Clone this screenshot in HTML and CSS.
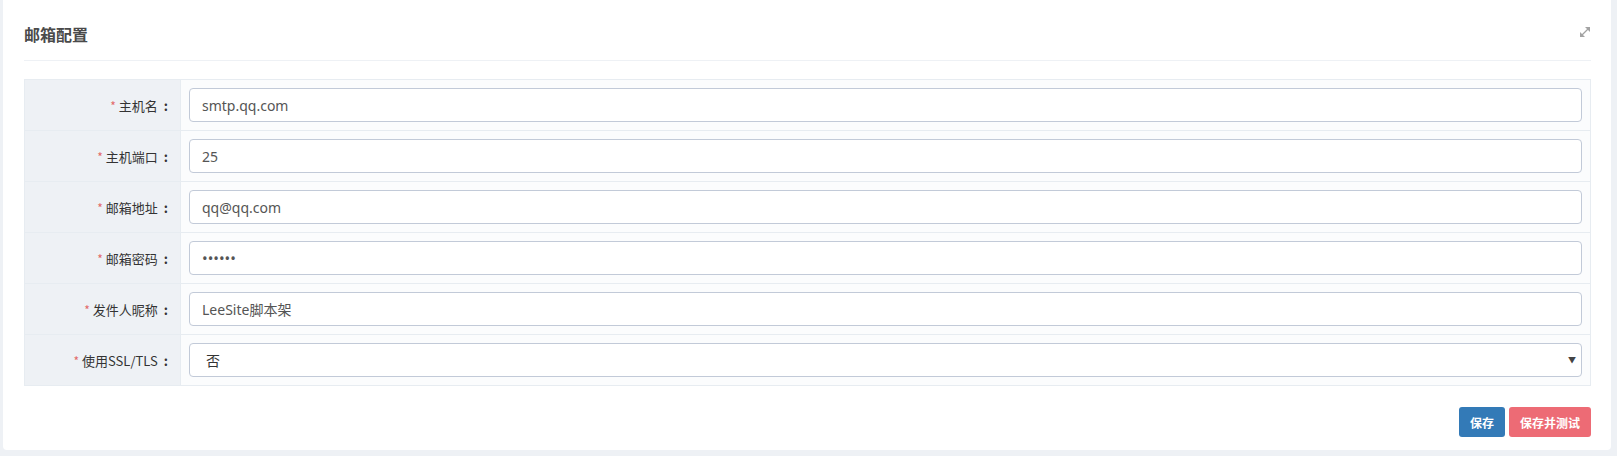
FILE: index.html
```html
<!DOCTYPE html>
<html lang="zh-CN">
<head>
<meta charset="utf-8">
<title>邮箱配置</title>
<link rel="stylesheet" href="styles.css">
</head>
<body>
<div class="panel">
  <div class="panel-head">
    <span class="title">邮箱配置</span>
    <svg class="expand" width="12" height="12" viewBox="0 0 12 12">
      <line x1="3" y1="9" x2="9" y2="3" stroke="#a3a3a3" stroke-width="1.3"/>
      <polygon points="11,1 11,6 6,1" fill="#a3a3a3"/>
      <polygon points="1,11 1,6 6,11" fill="#a3a3a3"/>
    </svg>
  </div>
  <div class="panel-body">
    <div class="form-table">
      <div class="row">
        <div class="label"><span class="req">*</span>主机名<span class="colon">:</span></div>
        <div class="value"><input class="field" type="text" value="smtp.qq.com"></div>
      </div>
      <div class="row">
        <div class="label"><span class="req">*</span>主机端口<span class="colon">:</span></div>
        <div class="value"><input class="field" type="text" value="25"></div>
      </div>
      <div class="row">
        <div class="label"><span class="req">*</span>邮箱地址<span class="colon">:</span></div>
        <div class="value"><input class="field" type="text" value="qq@qq.com"></div>
      </div>
      <div class="row">
        <div class="label"><span class="req">*</span>邮箱密码<span class="colon">:</span></div>
        <div class="value"><input class="field pwd" type="password" value="123456"></div>
      </div>
      <div class="row">
        <div class="label"><span class="req">*</span>发件人昵称<span class="colon">:</span></div>
        <div class="value"><input class="field" type="text" value="LeeSite脚本架"></div>
      </div>
      <div class="row">
        <div class="label"><span class="req">*</span>使用SSL/TLS<span class="colon">:</span></div>
        <div class="value">
          <div class="select-wrap">
            <select class="field select">
              <option>否</option>
              <option>是</option>
            </select>
            <span class="caret">▼</span>
          </div>
        </div>
      </div>
    </div>
    <div class="actions">
      <button class="btn btn-blue" type="button">保存</button>
      <button class="btn btn-red" type="button">保存并测试</button>
    </div>
  </div>
</div>
</body>
</html>
```

FILE: styles.css
```css
* { box-sizing: border-box; }
html, body { margin: 0; padding: 0; }
body {
  background: #eef1f5;
  font-family: "Noto Sans", "Noto Sans CJK SC", sans-serif;
  color: #333;
  width: 1617px;
  height: 456px;
  overflow: hidden;
}
.panel {
  margin-left: 3px;
  width: 1608px;
  height: 450px;
  background: #fff;
  border-radius: 0 0 4px 4px;
  padding: 0 20px 0 21px;
}
.panel-head {
  height: 61px;
  border-bottom: 1px solid #eef1f5;
  display: flex;
  align-items: center;
  justify-content: space-between;
  padding-top: 8px;
}
.title {
  font-family: "Noto Sans CJK SC", sans-serif;
  font-size: 16px;
  font-weight: 600;
  color: #4a4a4a;
}
.expand { margin-top: -4px; }
.panel-body { padding-top: 18px; }
.form-table {
  border: 1px solid #e7ecf1;
  border-bottom: none;
}
.row {
  display: flex;
  border-bottom: 1px solid #e7ecf1;
}
.label {
  width: 156px;
  flex: none;
  background: #eef1f5;
  border-right: 1px solid #e7ecf1;
  display: flex;
  align-items: center;
  justify-content: flex-end;
  padding-right: 12px;
  font-family: "Noto Sans CJK SC", sans-serif;
  font-size: 13px;
  color: #333;
}
.colon {
  margin-left: 6px;
  font-weight: 600;
}
.req {
  color: #e26a6a;
  margin-right: 3px;
  font-size: 12px;
}
.value {
  flex: 1;
  background: #fbfcfd;
  padding: 8px;
}
.field {
  display: block;
  width: 100%;
  height: 34px;
  border: 1px solid #c2cad8;
  border-radius: 4px;
  background: #fff;
  padding: 0 12px;
  font-family: "Noto Sans", "Noto Sans CJK SC", sans-serif;
  font-size: 14px;
  color: #555;
  outline: none;
}
.pwd { font-size: 15px; letter-spacing: 0; }
.select-wrap { position: relative; }
.select {
  appearance: none;
  -webkit-appearance: none;
  padding-left: 16px;
  color: #333;
  font-family: "Noto Sans CJK SC", sans-serif;
}
.caret {
  position: absolute;
  right: 6px;
  top: 11px;
  font-size: 8px;
  color: #444;
  pointer-events: none;
}
.actions {
  display: flex;
  justify-content: flex-end;
  gap: 4px;
  padding-top: 21px;
}
.btn {
  height: 30px;
  border: none;
  border-radius: 3px;
  color: #fff;
  font-family: "Noto Sans CJK SC", sans-serif;
  font-size: 12px;
  font-weight: 600;
  padding: 0;
}
.btn-blue { background: #337ab7; width: 46px; }
.btn-red { background: #ed6b75; width: 82px; }
```
